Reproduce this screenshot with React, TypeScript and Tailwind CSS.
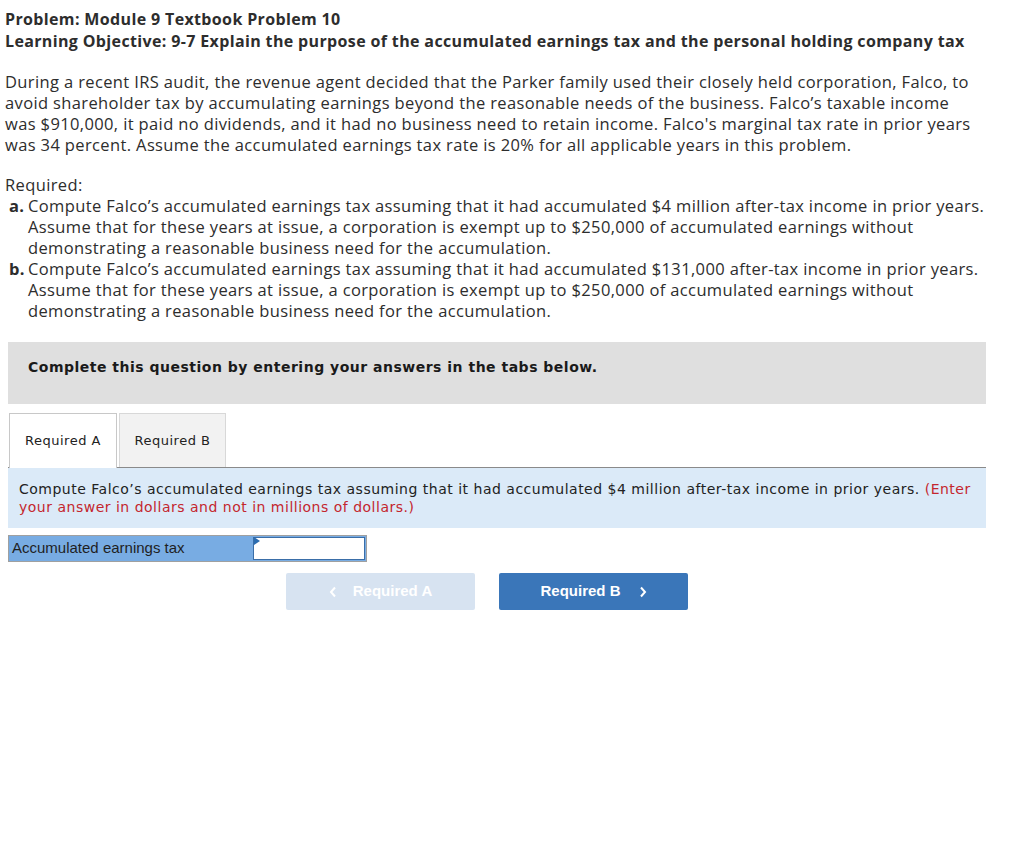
import React from "react";

const P = "font-['Open_Sans',sans-serif]";
const V = "font-['DejaVu_Sans',Verdana,sans-serif] tracking-[0.5px]";
const A = "font-['Liberation_Sans',Arial,sans-serif]";

function Line({ children, className = "" }: { children: React.ReactNode; className?: string }) {
  return <div className={`whitespace-nowrap ${className}`}>{children}</div>;
}

export default function App() {
  return (
    <div className="w-[1024px] h-[864px] bg-white text-[#2d2d2d]">
      <div className={`${P} px-[5px] pt-[8px] text-[16.5px] leading-[21px] tracking-[0.37px]`}>
        <div className="font-bold text-[16px] leading-[22px] tracking-[0.36px]">
          <Line>Problem: Module 9 Textbook Problem 10</Line>
          <Line>Learning Objective: 9-7 Explain the purpose of the accumulated earnings tax and the personal holding company tax</Line>
        </div>
        <div className="mt-[19px]">
          <Line>During a recent IRS audit, the revenue agent decided that the Parker family used their closely held corporation, Falco, to</Line>
          <Line>avoid shareholder tax by accumulating earnings beyond the reasonable needs of the business. Falco’s taxable income</Line>
          <Line>was $910,000, it paid no dividends, and it had no business need to retain income. Falco's marginal tax rate in prior years</Line>
          <Line>was 34 percent. Assume the accumulated earnings tax rate is 20% for all applicable years in this problem.</Line>
        </div>
        <div className="mt-[19px]">
          <Line>Required:</Line>
          <div className="flex">
            <div className="w-[23px] pl-[4px] font-bold">a.</div>
            <div>
              <Line>Compute Falco’s accumulated earnings tax assuming that it had accumulated $4 million after-tax income in prior years.</Line>
              <Line>Assume that for these years at issue, a corporation is exempt up to $250,000 of accumulated earnings without</Line>
              <Line>demonstrating a reasonable business need for the accumulation.</Line>
            </div>
          </div>
          <div className="flex">
            <div className="w-[23px] pl-[4px] font-bold">b.</div>
            <div>
              <Line>Compute Falco’s accumulated earnings tax assuming that it had accumulated $131,000 after-tax income in prior years.</Line>
              <Line>Assume that for these years at issue, a corporation is exempt up to $250,000 of accumulated earnings without</Line>
              <Line>demonstrating a reasonable business need for the accumulation.</Line>
            </div>
          </div>
        </div>
      </div>

      <div className="ml-[8px] w-[978px] mt-[21px]">
        <div className={`${V} bg-[#dfdfdf] h-[62px] pt-[16px] pl-[20px] font-bold text-[14px] leading-[18px] text-[#1a1a1a]`}>
          Complete this question by entering your answers in the tabs below.
        </div>

        <div className={`${V} mt-[9px] flex items-end gap-[2px] pl-[1px] border-b border-[#8a8a8a] text-[13px] text-[#222]`}>
          <div className="w-[108px] h-[55px] bg-white border border-[#c8c8c8] border-b-0 flex items-center justify-center -mb-px">
            Required A
          </div>
          <div className="w-[107px] h-[54px] bg-[#f2f2f2] border border-[#d8d8d8] border-b-0 flex items-center justify-center">
            Required B
          </div>
        </div>

        <div className={`${V} bg-[#dbeaf8] h-[60px] px-[11px] pt-[12px] text-[14px] leading-[18px] text-[#222]`}>
          <Line>
            Compute Falco’s accumulated earnings tax assuming that it had accumulated $4 million after-tax income in prior years.{" "}
            <span className="text-[#c4262e]">(Enter</span>
          </Line>
          <Line className="text-[#c4262e]">your answer in dollars and not in millions of dollars.)</Line>
        </div>

        <div className="mt-[7px] flex h-[27px] border border-[#a0a0a0] w-[359px]">
          <div className={`${A} w-[244px] bg-[#78ace3] text-[15px] text-[#1f1f1f] flex items-center pl-[3px]`}>
            Accumulated earnings tax
          </div>
          <div className="relative flex-1 bg-[#78ace3] p-[1px] pl-0">
            <div className="w-full h-full bg-white border border-[#3a6ea8]" />
            <svg className="absolute left-[1px] top-[1px]" width="6" height="8" viewBox="0 0 6 8">
              <polygon points="0,0 6,4 0,8" fill="#2b6cb0" />
            </svg>
          </div>
        </div>

        <div className={`${A} mt-[11px] flex gap-[24px] pl-[278px]`}>
          <div className="w-[189px] h-[37px] rounded-[2px] bg-[#d7e3f1] text-white font-bold text-[15px] flex items-center justify-center gap-[16px]">
            <svg width="8" height="12" viewBox="0 0 8 12"><polyline points="6,1.5 2,6 6,10.5" fill="none" stroke="white" strokeWidth="2" /></svg>
            <span>Required A</span>
          </div>
          <div className="w-[189px] h-[37px] rounded-[2px] bg-[#3a76b9] text-white font-bold text-[15px] flex items-center justify-center gap-[18px]">
            <span>Required B</span>
            <svg width="8" height="12" viewBox="0 0 8 12"><polyline points="2,1.5 6,6 2,10.5" fill="none" stroke="white" strokeWidth="2" /></svg>
          </div>
        </div>
      </div>
    </div>
  );
}
